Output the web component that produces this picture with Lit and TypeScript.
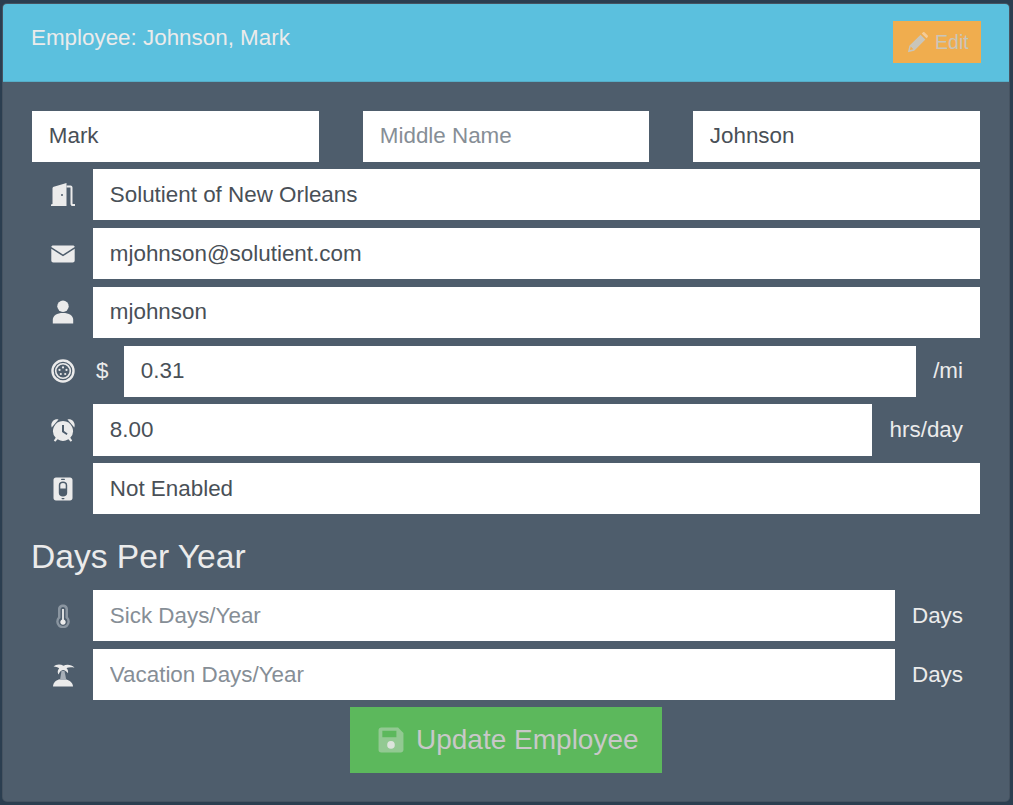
import { LitElement, html, css, svg } from "lit";
import { customElement } from "lit/decorators.js";

const ic = (body: unknown) => html`<svg class="ico" viewBox="0 0 24 24" aria-hidden="true">${body}</svg>`;

const door = svg`<path fill="#ebebeb" fill-rule="evenodd" d="M0 23v-1.500l1.500-.5V5.500c0-.9.400-1.500 1.300-1.800L15.500 0v23H0zm11-12a1 1 0 1 0 0 2 1 1 0 0 0 0-2z"/><path fill="none" stroke="#ebebeb" stroke-width="2" d="M15.500 3.600h4c.7 0 1 .4 1 1V20.400c0 1 .5 1.600 1.500 1.600h2"/>`;
const mail = svg`<path fill="#ebebeb" d="M2.200 3.500h19.600c1 0 1.800.6 1.900 1.400L12 12.500.3 4.900C.4 4.100 1.200 3.500 2.200 3.500zM.3 6.800 12 14.300l11.700-7.500V18.400c0 1.100-.9 2-2 2H2.300c-1.100 0-2-.9-2-2z"/>`;
const user = svg`<circle cx="12" cy="6.300" r="5.700" fill="#ebebeb"/><path fill="#ebebeb" d="M1.800 23.500v-3.800c0-4 4.200-6.700 10.200-6.700s10.200 2.700 10.200 6.700v3.800z"/>`;
const coin = svg`<circle cx="12" cy="12" r="10.500" fill="none" stroke="#ebebeb" stroke-width="2.400"/><circle cx="12" cy="12" r="7.300" fill="none" stroke="#ebebeb" stroke-width="1.600"/><g fill="#ebebeb"><circle cx="12" cy="8.400" r="1.100"/><circle cx="8.500" cy="10.900" r="1.100"/><circle cx="15.500" cy="10.900" r="1.100"/><circle cx="9.800" cy="15" r="1.100"/><circle cx="14.200" cy="15" r="1.100"/></g>`;
const clock = svg`<path fill="#ebebeb" fill-rule="evenodd" d="M12 3a10 10 0 0 1 7.300 16.800l1.900 2.700-1.500 1.200-2.300-2.400a10 10 0 0 1-10.800 0l-2.300 2.400-1.500-1.200 1.900-2.700A10 10 0 0 1 12 3zm-1 4v7l4.600 3 1-1.500-3.600-2.400V7z"/><path fill="#ebebeb" d="M.7 9.500C-.8 5 2.500.5 7.500 1.500zM23.300 9.500C24.800 5 21.500.5 16.500 1.500z"/>`;
const phone = svg`<path fill="#ebebeb" fill-rule="evenodd" d="M5 .5h14c1.500 0 2.500 1 2.500 2.500v18c0 1.500-1 2.500-2.500 2.500H5c-1.500 0-2.500-1-2.500-2.500V3C2.500 1.500 3.500.5 5 .5zM12 4.500c-2.600 0-4.200 1.400-4.200 3.500v8c0 2.100 1.600 3.500 4.200 3.500s4.200-1.400 4.200-3.500V8c0-2.100-1.600-3.500-4.200-3.500z"/><path fill="#ebebeb" d="M9.300 11.500V8c0-1.300 1.100-2 2.700-2s2.700.7 2.700 2v3.500z"/><rect x="10" y="1.700" width="4" height="1.200" rx=".6" fill="#4e5d6c"/><rect x="10.500" y="21" width="3" height="1.200" rx=".6" fill="#4e5d6c"/>`;
const thermo = svg`<path fill="#8a95a0" fill-rule="evenodd" d="M12 .5c2.900 0 5 2 5 4.800v7.600a6.800 6.800 0 1 1-10 0V5.300C7 2.500 9.100.5 12 .5zm0 2.500c-1.400 0-2.500.9-2.500 2.400v8.500a4.400 4.400 0 1 0 5 0V5.400C14.500 3.900 13.400 3 12 3z"/><path fill="#ebebeb" d="M11.100 5h1.800v10.500a2.700 2.700 0 1 1-1.800 0z"/>`;
const island = svg`<path fill="#ebebeb" d="M2 23.500c0-4.500 4-7.500 9.500-7.500s10.500 3 10.500 7.500z"/><path fill="#a8b0b8" d="M10.500 8h3l1.800 9H9z"/><path fill="#ebebeb" d="M2.500 3.500C5 1 9.500.8 12.500 2.700c3-1.600 8-1.400 11 2-2.800-.7-5.800-.6-8 .4 1.500 1.500 1.800 3.200 1.500 5.200-1.500-2-3.200-3-5-3.300-1.800.3-3.400 1.800-4.500 4.500-1.200-2-1-4.500.7-6.300-1.800-.9-3.800-1.400-5.200-1.700z"/>`;
const pencil = svg`<path fill="#c9c5ba" d="M1 23l1.700-7.200L15.500 3l5.500 5.500L8.200 21.300zM4.300 16.500 3.300 20.700l4-1z"/><path fill="#f4cb96" d="M16.800 1.700l1.300-1.200c.6-.6 1.500-.6 2.100 0l3.300 3.300c.6.600.6 1.500 0 2.100l-1.200 1.300z"/>`;
const save = svg`<path fill="#92c992" fill-rule="evenodd" d="M3 .5h15.500l5 5V21c0 1.400-1.100 2.500-2.500 2.500H3A2.500 2.500 0 0 1 .5 21V3C.5 1.600 1.600.5 3 .5zM4 3.500v6h13v-6z"/><circle cx="12" cy="16.500" r="3.500" fill="#dce4dc"/>`;

@customElement("app-root")
export class AppRoot extends LitElement {
  static styles = css`
    :host {
      display: block;
      width: 1013px;
      height: 805px;
      box-sizing: border-box;
      padding: 3px 3px 3px 2px;
      background: #2b3e50;
      font-family: "Liberation Sans", Arial, sans-serif;
      font-size: 22.4px;
      color: #ebebeb;
      overflow: hidden;
    }
    .panel {
      height: 100%;
      background: #4e5d6c;
      border: 1px solid rgba(0, 0, 0, 0.1);
      border-radius: 5px;
      box-sizing: border-box;
      overflow: hidden;
    }
    .head {
      height: 78px;
      box-sizing: border-box;
      background: #5bc0de;
      border-bottom: 1px solid #56aec8;
      padding: 17px 28px 0 28px;
      display: flex;
      justify-content: space-between;
      align-items: flex-start;
    }
    .title { font-size: 22.4px; line-height: 33px; color: #ebebeb; }
    .edit {
      width: 88px;
      height: 42px;
      box-sizing: border-box;
      padding-left: 14px;
      background: #f0ad4e;
      display: flex;
      align-items: center;
      gap: 7px;
      font-size: 19.6px;
      color: #c9c5ba;
    }
    .edit .ico { width: 21px; height: 21px; }
    .body { padding: 29px 29px 0 29px; }
    .names { display: grid; grid-template-columns: 287px 286px 287px; column-gap: 44px; margin-bottom: 7.25px; }
    .names input { height: 51px; padding-bottom: 1px; }
    .row { display: flex; align-items: center; height: 51.2px; margin-bottom: 7.58px; }
    .iconbox { width: 61px; flex: none; display: flex; justify-content: center; align-items: center; }
    .ico { width: 24px; height: 24px; display: block; flex: none; }
    input {
      flex: 1;
      min-width: 0;
      width: 100%;
      height: 51.2px;
      box-sizing: border-box;
      border: 0;
      border-radius: 0;
      outline: none;
      padding: 0 16.8px;
      background: #fff;
      font: 22.4px "Liberation Sans", Arial, sans-serif;
      color: #495057;
    }
    input::placeholder { color: #868e96; opacity: 1; }
    .pre { width: 31px; flex: none; padding-left: 3px; box-sizing: border-box; }
    .suf { flex: none; padding: 0 17px 0 17.2px; }
    h2 {
      margin: 0 0 0 -1px;
      font-size: 33.6px;
      font-weight: 400;
      line-height: 38px;
      padding: 16.5px 0 13.85px;
      color: #ebebeb;
    }
    .actions { display: flex; justify-content: center; margin-top: -1px; }
    .update {
      width: 312px;
      height: 66px;
      box-sizing: border-box;
      padding-left: 28px;
      background: #5cb85c;
      display: flex;
      align-items: center;
      gap: 12px;
      font-size: 28px;
      color: #c8c8c8;
    }
    .update .ico { width: 26px; height: 26px; }
  `;

  private row(icon: unknown, value: string, placeholder = "", pre = "", suf = "") {
    return html`<div class="row">
      <div class="iconbox">${ic(icon)}</div>
      ${pre ? html`<span class="pre">${pre}</span>` : ""}
      <input .value=${value} placeholder=${placeholder} />
      ${suf ? html`<span class="suf">${suf}</span>` : ""}
    </div>`;
  }

  render() {
    return html`<div class="panel">
      <div class="head">
        <div class="title">Employee: Johnson, Mark</div>
        <div class="edit">${ic(pencil)}<span>Edit</span></div>
      </div>
      <div class="body">
        <div class="names">
          <input .value=${"Mark"} placeholder="First Name" />
          <input placeholder="Middle Name" />
          <input .value=${"Johnson"} placeholder="Last Name" />
        </div>
        ${this.row(door, "Solutient of New Orleans")}
        ${this.row(mail, "mjohnson@solutient.com")}
        ${this.row(user, "mjohnson")}
        ${this.row(coin, "0.31", "", "$", "/mi")}
        ${this.row(clock, "8.00", "", "", "hrs/day")}
        ${this.row(phone, "Not Enabled")}
        <h2>Days Per Year</h2>
        ${this.row(thermo, "", "Sick Days/Year", "", "Days")}
        ${this.row(island, "", "Vacation Days/Year", "", "Days")}
        <div class="actions">
          <div class="update">${ic(save)}<span>Update Employee</span></div>
        </div>
      </div>
    </div>`;
  }
}
